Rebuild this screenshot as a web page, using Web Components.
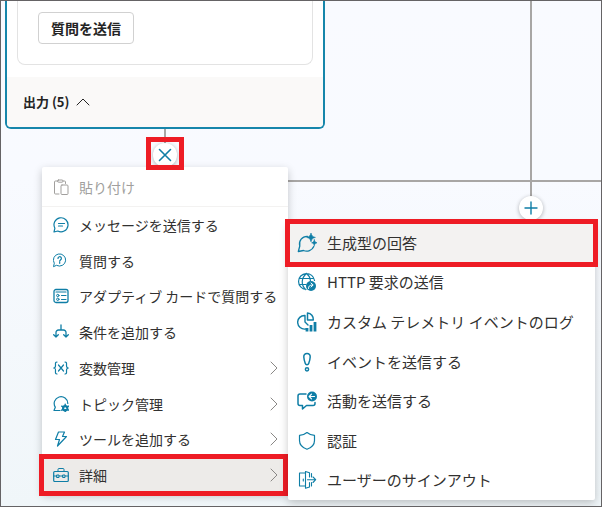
<!DOCTYPE html>
<html lang="ja">
  <head>
    <meta charset="utf-8">
    <title>Authoring canvas</title>
    <meta name="viewport" content="width=device-width, initial-scale=1.0">
    <style>
      body {
        margin: 0;
        font-family: "Noto Sans CJK JP", "Noto Sans", sans-serif;
        font-size: 14px;
        line-height: 20px;
        color: #323130;
      }
      .node { left: 5px; top: 0; width: 320px; }
      .stem { left: 164px; top: 129px; width: 2px; height: 16px; }
      .trunk { left: 530px; top: 0; width: 2px; height: 200px; }
      .rail { left: 288px; right: 0; top: 180px; height: 2px; }
      .close { left: 153px; top: 143px; }
      .add { left: 519px; top: 196px; }
      .main-menu { left: 42px; top: 167px; width: 246px; min-height: 326px; }
      .sub-menu { left: 288px; top: 223px; width: 307px; min-height: 277px; }
      .mark { left: 146px; top: 137px; width: 28px; height: 23px; }
      .node, .stem, .trunk, .rail, .close, .add, .main-menu, .sub-menu, .mark {
        position: absolute;
      }
      .stem, .trunk, .rail { background: #a8a6a5; }
      .mark { border: 5px solid #ee1c25; pointer-events: none; }
    </style>
  </head>
  <body>
    <x-canvas>
      <div class="trunk"></div>
      <div class="rail"></div>
      <div class="stem"></div>
      <x-node class="node">
        <span slot="action">質問を送信</span>
        <span slot="outputs">出力 (5)</span>
      </x-node>
      <x-round-button class="add" icon="plus" label="ノードの追加"></x-round-button>
      <x-round-button class="close" icon="cross" label="閉じる"></x-round-button>
      <x-menu class="main-menu">
        <x-menu-item icon="paste" disabled>貼り付け</x-menu-item>
        <x-menu-item icon="message">メッセージを送信する</x-menu-item>
        <x-menu-item icon="question">質問する</x-menu-item>
        <x-menu-item icon="card">アダプティブ カードで質問する</x-menu-item>
        <x-menu-item icon="branch">条件を追加する</x-menu-item>
        <x-menu-item icon="variable" more>変数管理</x-menu-item>
        <x-menu-item icon="topic" more>トピック管理</x-menu-item>
        <x-menu-item icon="bolt" more>ツールを追加する</x-menu-item>
        <x-menu-item icon="toolbox" more marked>詳細</x-menu-item>
      </x-menu>
      <x-menu class="sub-menu">
        <x-menu-item large icon="generative" marked>生成型の回答</x-menu-item>
        <x-menu-item large icon="http">HTTP 要求の送信</x-menu-item>
        <x-menu-item large icon="telemetry">カスタム テレメトリ イベントのログ</x-menu-item>
        <x-menu-item large icon="event">イベントを送信する</x-menu-item>
        <x-menu-item large icon="activity">活動を送信する</x-menu-item>
        <x-menu-item large icon="shield">認証</x-menu-item>
        <x-menu-item large icon="signout">ユーザーのサインアウト</x-menu-item>
      </x-menu>
      <div class="mark"></div>
    </x-canvas>

    <script>
      // name: [viewBox size, shapes]
      const ICONS = {
        plus: [16, '<path d="M8 2v12M2 8h12" stroke-width="1.4"/>'],
        cross: [16, '<path d="M2.5 2.5l11 11M13.5 2.5l-11 11" stroke-width="1.6"/>'],
        up: [16, '<path d="M2 11l6-6 6 6"/>'],
        right: [16, '<path d="M5 2l6 6-6 6"/>'],
        paste: [16, '<path d="M6 15H2.500a1 1 0 0 1-1-1V3a1 1 0 0 1 1-1H5M10 2h1.500a1 1 0 0 1 1 1v1.500"/><rect x="4.500" y="1" width="5.500" height="2.200" rx="1"/><rect x="8" y="6" width="7" height="9.500" rx="1"/>'],
        message: [16, '<path d="M1 15l.9-3.800A7 7 0 1 1 4.800 14z" stroke-width="1.200"/><path d="M5.500 6.500h6M5.500 9h4" stroke-width="1.200"/>'],
        question: [16, '<path d="M.6 13.300l.7-3.100A6.100 6.100 0 1 1 3.800 12.500z"/><path d="M5 5.500a1.700 1.700 0 1 1 2.500 1.400c-.6.4-.8.7-.8 1.300M6.700 9.300v1" stroke-width="1.200"/>'],
        card: [16, '<rect x="1" y="1.500" width="14" height="13" rx="2" stroke-width="1.300"/><path d="M3 4h10M8.500 7.500h4.500M8.500 11.500h4.500" stroke-width="1.200"/><circle cx="4.800" cy="7.500" r="1.200"/><circle cx="4.800" cy="11.300" r="1.200"/>'],
        branch: [16, '<path d="M8 1v5M3 13V8.500A2.500 2.500 0 0 1 5.500 6h5A2.500 2.500 0 0 1 13 8.500V13M.7 10.700L3 13l2.300-2.300M10.700 10.700L13 13l2.300-2.300" stroke-width="1.300"/>'],
        variable: [16, '<path d="M4 2C2 2 2.500 3.500 2.500 5.500S2.200 8 .7 8c1.500 0 1.800.5 1.800 2.500S2 14 4 14M12 2c2 0 1.500 1.500 1.500 3.500S13.800 8 15.300 8c-1.500 0-1.800.5-1.800 2.500S14 14 12 14M5.500 5l5 6M10.500 5l-5 6" stroke-width="1.200"/>'],
        topic: [16, '<path d="M7 14.500H1l1.300-3.300A6.800 6.800 0 1 1 14.800 7.500" stroke-width="1.200"/><circle cx="12.200" cy="12.200" r="2.200" stroke-width="2"/><path d="M12.200 8.200v8M8.700 10.200l7 4M15.700 10.200l-7 4" stroke-width="1.400"/><circle cx="12.200" cy="12.200" r=".9" fill="#fff" stroke="none"/>'],
        bolt: [16, '<path d="M5.500 1h6L9.500 5.500h4L4.500 15l2-6.500h-4z" stroke-width="1.200"/>'],
        toolbox: [16, '<rect x=".7" y="4.500" width="14.600" height="10" rx="1" stroke-width="1.200"/><path d="M5 4.500V2.500a1 1 0 0 1 1-1h4a1 1 0 0 1 1 1v2M.5 9H4M6 9h4M12 9h3.500M4 8h2v2.500H4zM10 8h2v2.500h-2z"/>'],
        generative: [20, '<path d="M10.500 3.300A7.600 7.600 0 0 0 2.800 13L1.300 18.500l5.200-1A7.800 7.800 0 0 0 16.800 13.500" stroke-width="1.300"/><path d="M14 0c.8 3 1.500 3.700 4.400 4.400-2.900.7-3.600 1.400-4.400 4.400-.8-3-1.500-3.700-4.400-4.400C12.500 3.700 13.200 3 14 0zM17.300 6.800c.5 2 .9 2.500 2.700 3-1.800.5-2.200 1-2.700 3-.5-2-.9-2.500-2.700-3 1.800-.5 2.200-1 2.700-3z" fill="currentColor" stroke-width=".6"/>'],
        http: [20, '<path d="M9 17.500A8 8 0 1 1 17.500 8.500M9.500 1.500C4 6 4 13 8.500 17.500M9.500 1.500c2.600 2 3.700 4.500 3.900 7M2.300 6.500h14.400M2.300 12.500H9" stroke-width="1.200"/><circle cx="14" cy="14" r="5" fill="currentColor" stroke="none"/><path d="M11.500 16.500c0-2.400 1-3.500 4-3.500M14 11l2.200 2-2.200 2" stroke="#fff"/>'],
        telemetry: [20, '<path d="M8 3.500A6.800 6.800 0 1 0 8.500 17M8 3.500V10l3 3" stroke-width="1.400"/><path d="M10.500 1v7h5.800A6.300 6.300 0 0 0 10.500 1z" stroke-width="1.500"/><path d="M10 16v3.500M14 13v6.500M18 10v9.500" stroke-width="2.800" stroke-linecap="butt"/>'],
        event: [20, '<path d="M10 1.500c-2.200 0-3.300 1.500-3.200 3.500.2 3 .9 5 1.500 6.500.6 1.700 2.800 1.700 3.400 0 .6-1.500 1.300-3.500 1.500-6.500.1-2-1-3.500-3.200-3.500z" stroke-width="1.500"/><circle cx="10" cy="17.300" r="1.600" stroke-width="1.500"/>'],
        activity: [20, '<path d="M9 3H3a2 2 0 0 0-2 2v7.500a2 2 0 0 0 2 2h2.500V18l4-3.500H16a2 2 0 0 0 2-2V11.500" stroke-width="1.500"/><circle cx="15" cy="5.500" r="5" fill="currentColor" stroke="none"/><path d="M12.300 5.500h5.200M14.500 3.200l-2.300 2.300 2.300 2.300" stroke="#fff" stroke-width="1.200"/>'],
        shield: [20, '<path d="M10 1.500c2.200 1.800 4.500 2.700 7.500 2.900V9.500c0 4.300-3 7.200-7.500 8.800-4.500-1.600-7.500-4.500-7.500-8.800V4.400C5.500 4.200 7.800 3.300 10 1.500z" stroke-width="1.200"/>'],
        signout: [20, '<path d="M8.500 3h-6v13h6M8.500 1.500l4 1.200M8.500 18.200V1.500M8.500 18.200l4-1.200M12.500 2.700V7M12.500 17v-4.500M14.500 3.500V7M14.500 16v-3.500M6.300 9v2M10.500 9.700h8M16 7l2.700 2.700L16 12.500" stroke-width="1.100"/>'],
      };

      class IconElement extends HTMLElement {
        static registerCustomElement() {
          window.customElements.define('x-icon', IconElement);
        }

        static observedAttributes = ['name'];

        constructor() {
          super();
          this.attachShadow({ mode: 'open' });
        }

        attributeChangedCallback(name, oldVal, val) {
          const [size, shapes] = ICONS[val] || [16, ''];
          this.shadowRoot.innerHTML = `
            <style>
              :host { display: inline-flex; flex: none; }
            </style>
            <svg width="${size}" height="${size}" viewBox="0 0 ${size} ${size}" fill="none"
              stroke="currentColor" stroke-linecap="round" stroke-linejoin="round"
              aria-hidden="true">${shapes}</svg>
          `;
        }
      }

      class CanvasElement extends HTMLElement {
        static registerCustomElement() {
          CanvasElement.template = document.createElement('template');
          CanvasElement.template.innerHTML = `
            <style>
              :host {
                display: block;
                position: relative;
                min-height: 100vh;
                overflow: hidden;
                background: linear-gradient(#f9faff, #f8faff 35%, #f0f6f9);
              }
              :host::after {
                content: '';
                position: absolute;
                inset: 0;
                border: 1px solid #656365;
                pointer-events: none;
              }
            </style>
            <slot></slot>
          `;
          window.customElements.define('x-canvas', CanvasElement);
        }

        constructor() {
          super();
          const shadowRoot = this.attachShadow({ mode: 'open' });
          shadowRoot.appendChild(CanvasElement.template.content.cloneNode(true));
        }
      }

      class NodeElement extends HTMLElement {
        static registerCustomElement() {
          NodeElement.template = document.createElement('template');
          NodeElement.template.innerHTML = `
            <style>
              :host {
                display: block;
                box-sizing: border-box;
                border: 2px solid #1686ab;
                border-top: 0;
                border-radius: 0 0 6px 6px;
                background: #fff;
                overflow: hidden;
                font-weight: 700;
                color: #242424;
              }
              .card {
                margin: 0 10px 12px;
                padding: 12px 20px 20px;
                border: 1px solid #e3e3e3;
                border-top: 0;
                border-radius: 0 0 8px 8px;
              }
              button { font: inherit; color: inherit; }
              .action {
                display: block;
                padding: 5px 12px;
                border: 1px solid #d1d1d1;
                border-radius: 4px;
                background: #fff;
              }
              .outputs {
                display: flex;
                align-items: center;
                gap: 6px;
                width: 100%;
                padding: 15px 16px;
                border: 0;
                background: #faf9f8;
                font-size: 13px;
              }
            </style>
            <div class="card">
              <button class="action"><slot name="action"></slot></button>
            </div>
            <button class="outputs">
              <slot name="outputs"></slot>
              <x-icon name="up"></x-icon>
            </button>
          `;
          window.customElements.define('x-node', NodeElement);
        }

        constructor() {
          super();
          const shadowRoot = this.attachShadow({ mode: 'open' });
          shadowRoot.appendChild(NodeElement.template.content.cloneNode(true));
        }
      }

      class RoundButtonElement extends HTMLElement {
        static registerCustomElement() {
          RoundButtonElement.template = document.createElement('template');
          RoundButtonElement.template.innerHTML = `
            <style>
              :host { display: block; }
              button {
                display: flex;
                align-items: center;
                justify-content: center;
                width: 24px;
                height: 24px;
                padding: 0;
                border: 0;
                border-radius: 50%;
                background: #fff;
                color: #0f7ea6;
                box-shadow: 0 1px 4px #0000004d;
              }
            </style>
            <button><x-icon></x-icon></button>
          `;
          window.customElements.define('x-round-button', RoundButtonElement);
        }

        constructor() {
          super();
          const shadowRoot = this.attachShadow({ mode: 'open' });
          shadowRoot.appendChild(RoundButtonElement.template.content.cloneNode(true));
        }

        connectedCallback() {
          this.shadowRoot.querySelector('x-icon').setAttribute('name', this.getAttribute('icon'));
          this.shadowRoot.querySelector('button').setAttribute('aria-label', this.getAttribute('label'));
        }
      }

      class MenuElement extends HTMLElement {
        static registerCustomElement() {
          MenuElement.template = document.createElement('template');
          MenuElement.template.innerHTML = `
            <style>
              :host {
                display: flex;
                flex-direction: column;
                border-radius: 2px;
                background: #fff;
                box-shadow: 0 3px 8px #00000038;
              }
            </style>
            <slot></slot>
          `;
          window.customElements.define('x-menu', MenuElement);
        }

        constructor() {
          super();
          const shadowRoot = this.attachShadow({ mode: 'open' });
          shadowRoot.appendChild(MenuElement.template.content.cloneNode(true));
          this.setAttribute('role', 'menu');
        }
      }

      class MenuItemElement extends HTMLElement {
        static registerCustomElement() {
          MenuItemElement.template = document.createElement('template');
          MenuItemElement.template.innerHTML = `
            <style>
              :host {
                display: flex;
                flex: 1 1 0;
                padding: 2px 5px 2px 2px;
              }
              button {
                display: flex;
                flex: 1;
                align-items: center;
                padding: 0 1px 0 9px;
                border: 0;
                background: none;
                font: inherit;
                color: inherit;
                text-align: left;
              }
              .icon { color: #0f7ea6; }
              .label {
                flex: 1;
                margin-left: 10px;
                white-space: nowrap;
              }
              .more { display: none; color: #8a8886; }
              :host([more]) .more { display: flex; }
              :host([disabled]) {
                flex: 0 0 40px;
                box-sizing: border-box;
                border-bottom: 1px solid #f3f2f1;
              }
              :host([disabled]) button,
              :host([disabled]) .icon { color: #a19f9d; }
              :host([marked]) button {
                background: #edebe9;
                outline: 5px solid #ee1c25;
              }
              :host([large]) { padding: 1px 2px; font-size: 15px; }
              :host([large]) button { padding: 0 7px; }
              :host([large][marked]) button { background: #f3f2f1; }
            </style>
            <button>
              <x-icon class="icon"></x-icon>
              <span class="label"><slot></slot></span>
              <x-icon class="more" name="right"></x-icon>
            </button>
          `;
          window.customElements.define('x-menu-item', MenuItemElement);
        }

        constructor() {
          super();
          const shadowRoot = this.attachShadow({ mode: 'open' });
          shadowRoot.appendChild(MenuItemElement.template.content.cloneNode(true));
        }

        connectedCallback() {
          this.shadowRoot.querySelector('.icon').setAttribute('name', this.getAttribute('icon'));
          this.shadowRoot.querySelector('button').disabled = this.hasAttribute('disabled');
        }
      }

      [IconElement, CanvasElement, NodeElement, RoundButtonElement, MenuElement, MenuItemElement]
        .forEach(x => { x.registerCustomElement() });
    </script>
  </body>
</html>
